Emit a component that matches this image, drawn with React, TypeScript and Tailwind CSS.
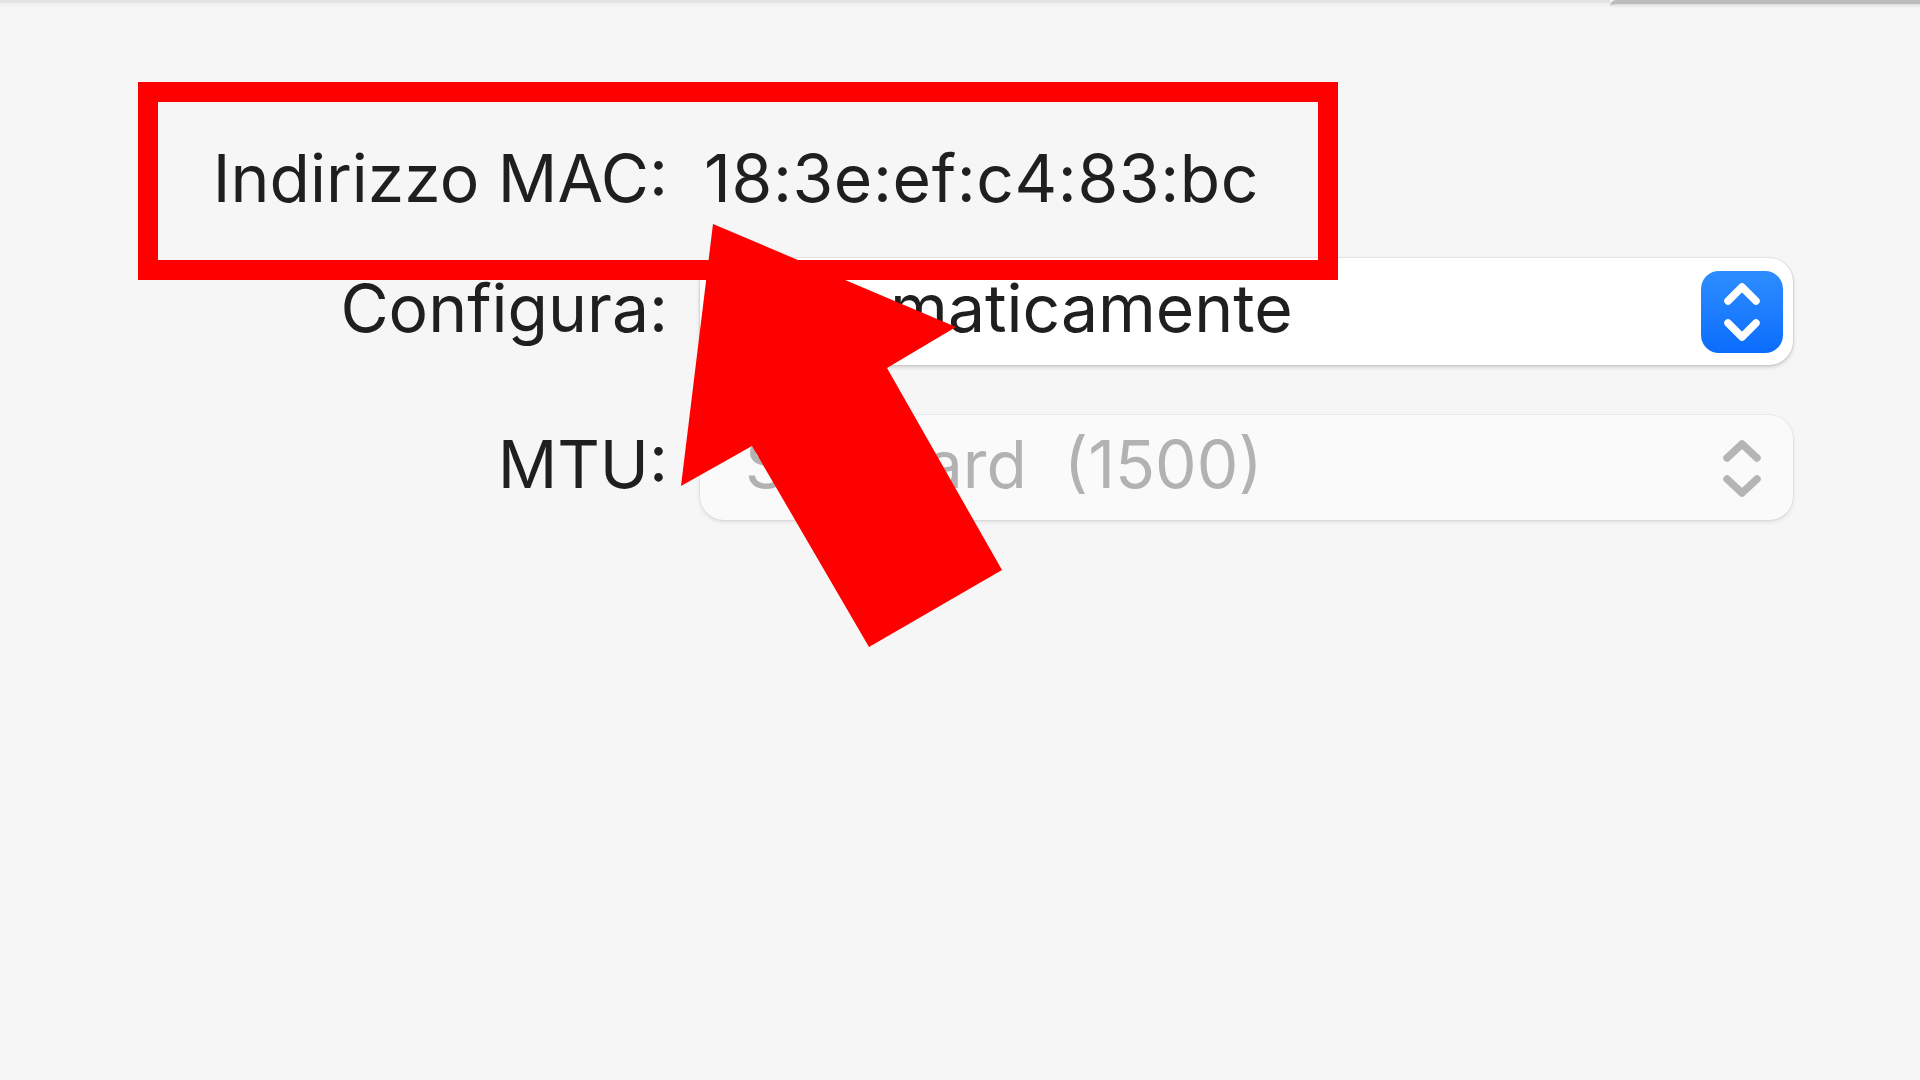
export default function App() {
  const font = { fontFamily: "Inter, 'Noto Sans', sans-serif" };

  return (
    <div
      className="relative w-[1920px] h-[1080px] overflow-hidden bg-[#f6f6f6] text-[#1f1f1f]"
      style={font}
    >
      {/* window edge at the top */}
      <div className="flex h-[8px]">
        <div className="flex-1 border-t-[3px] border-[#e3e3e3] bg-gradient-to-b from-[#ededed] to-[#f6f6f6]" />
        <div className="w-[310px] rounded-tl-[6px] border-t-[4px] border-[#bcbcbc] bg-gradient-to-b from-[#dedede] to-[#f6f6f6]" />
      </div>

      <div className="flex flex-col pt-[130px] text-[66px] leading-none">
        {/* MAC address */}
        <div className="flex items-center h-[80px]">
          <div className="w-[668px] text-right">Indirizzo MAC:</div>
          <div className="pl-[36px] tracking-[0.6px]">18:3e:ef:c4:83:bc</div>
        </div>

        {/* Configura */}
        <div className="flex items-center mt-[40px]">
          <div className="w-[668px] text-right pb-[7px]">Configura:</div>
          <div className="ml-[32px] flex h-[107px] w-[1093px] items-center justify-between rounded-[24px] bg-white pl-[45px] pr-[10px] shadow-[0_0_0_1px_rgba(0,0,0,0.06),0_2px_4px_rgba(0,0,0,0.18)]">
            <span className="pb-[7px]">Automaticamente</span>
            <div className="flex h-[82px] w-[82px] items-center justify-center rounded-[18px] bg-gradient-to-b from-[#2d8dff] to-[#0a6cfd]">
              <svg width="82" height="82" viewBox="0 0 82 82" fill="none">
                <path d="M27 30 L41 16 L55 30" stroke="white" strokeWidth="7.5" strokeLinecap="round" strokeLinejoin="round" />
                <path d="M27 52 L41 66 L55 52" stroke="white" strokeWidth="7.5" strokeLinecap="round" strokeLinejoin="round" />
              </svg>
            </div>
          </div>
        </div>

        {/* MTU */}
        <div className="flex items-center mt-[50px]">
          <div className="w-[668px] text-right pb-[7px]">MTU:</div>
          <div className="ml-[32px] flex h-[105px] w-[1093px] items-center justify-between rounded-[24px] bg-[#fafafa] pl-[45px] pr-[10px] shadow-[0_0_0_1px_rgba(0,0,0,0.04),0_2px_4px_rgba(0,0,0,0.1)]">
            <span className="pb-[7px] text-[#b2b2b2]">Standard&nbsp; (1500)</span>
            <div className="flex h-[82px] w-[82px] items-center justify-center">
              <svg width="82" height="82" viewBox="0 0 82 82" fill="none">
                <path d="M26 31 L41 17 L56 31" stroke="#b5b5b5" strokeWidth="7.5" strokeLinecap="round" strokeLinejoin="round" />
                <path d="M26 52 L41 66 L56 52" stroke="#b5b5b5" strokeWidth="7.5" strokeLinecap="round" strokeLinejoin="round" />
              </svg>
            </div>
          </div>
        </div>
      </div>

      {/* annotation: red box */}
      <div className="absolute left-[138px] top-[82px] h-[198px] w-[1200px] border-[20px] border-[#ff0000]" />

      {/* annotation: red arrow */}
      <svg className="absolute inset-0" width="1920" height="1080" viewBox="0 0 1920 1080">
        <polygon
          points="713,224 956,327 887,368 1002,570 869,647 752,446 681,486"
          fill="#ff0000"
        />
      </svg>
    </div>
  );
}
